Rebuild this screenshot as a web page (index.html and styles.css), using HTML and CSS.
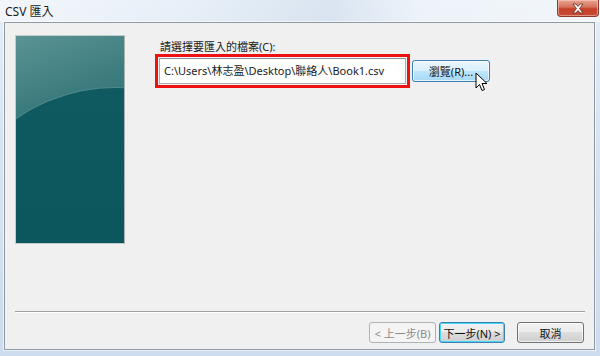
FILE: index.html
```html
<!DOCTYPE html>
<html lang="zh-Hant">
<head>
<meta charset="utf-8">
<title>CSV 匯入</title>
<link rel="stylesheet" href="styles.css">
</head>
<body>
<div class="window">
  <div class="titlebar">
    <span class="title">CSV 匯入</span>
    <div class="close">
      <svg width="16" height="11" viewBox="0 0 16 11">
        <path d="M3 1 L6 1 L8 3.5 L10 1 L13 1 L9.5 5.5 L13 10 L10 10 L8 7.5 L6 10 L3 10 L6.5 5.5 Z" fill="#fff" stroke="#5a2a20" stroke-width="0.8" stroke-linejoin="round"/>
      </svg>
    </div>
  </div>
  <div class="client">
    <div class="main">
      <div class="banner"></div>
      <div class="form">
        <div class="label">請選擇要匯入的檔案(C):</div>
        <div class="row">
          <div class="highlight">
            <div class="textbox">C:\Users\林志盈\Desktop\聯絡人\Book1.csv</div>
          </div>
          <div class="btn hover browse">瀏覽(R)...
            <svg class="cursor" width="14" height="21" viewBox="0 0 14 21">
              <path d="M1 1 L1 16 L4.5 12.5 L7 18.5 L9.5 17.5 L7 11.5 L12 11.5 Z" fill="#fff" stroke="#000" stroke-width="1" stroke-linejoin="miter"/>
            </svg>
          </div>
        </div>
      </div>
    </div>
    <div class="sep"></div>
    <div class="footer">
      <div class="btn disabled">&lt; 上一步(B)</div>
      <div class="btn default">下一步(N) &gt;</div>
      <div class="btn cancel">取消</div>
    </div>
  </div>
</div>
</body>
</html>
```
FILE: styles.css
```css
* { box-sizing: border-box; }
html, body { margin: 0; padding: 0; }
body {
  width: 600px;
  height: 356px;
  overflow: hidden;
  font-family: "Noto Sans", "Noto Sans CJK TC", sans-serif;
  font-size: 11px;
  color: #1a1a1a;
}
.window {
  width: 600px;
  height: 356px;
  display: flex;
  flex-direction: column;
  padding: 0 5px 6px 4px;
  background: linear-gradient(180deg, #e6eef7 0%, #d7e4f2 40%, #cddcee 100%);
}
.titlebar {
  height: 22px;
  display: flex;
  justify-content: space-between;
  align-items: flex-start;
  background: linear-gradient(90deg, rgba(255,255,255,0.5) 0%, rgba(255,255,255,0.1) 30%, rgba(200,215,232,0.4) 55%, rgba(255,255,255,0.3) 70%, rgba(255,255,255,0.5) 100%);
  margin: 0 -5px 0 -4px;
  padding: 0 5px 0 4px;
}
.title {
  font-size: 12px;
  line-height: 12px;
  margin-top: 6px;
  margin-left: 1px;
  color: #1b1b1b;
}
.close {
  width: 42px;
  height: 17px;
  margin-right: -4px;
  border: 1px solid #8a3a2c;
  border-top: none;
  border-radius: 0 0 4px 4px;
  background: linear-gradient(180deg, #e8a493 0%, #d5705a 45%, #c5412a 55%, #c64a33 100%);
  display: flex;
  align-items: center;
  justify-content: center;
  box-shadow: inset 0 0 0 1px rgba(255,220,210,0.5);
}
.client {
  flex: 1;
  display: flex;
  flex-direction: column;
  background: #f0f0f0;
  border: 1px solid #8f9aa5;
  box-shadow: 0 0 0 1px rgba(255,255,255,0.6);
}
.main {
  flex: 1;
  display: flex;
  padding: 12px 0 0 10px;
}
.banner {
  position: relative;
  overflow: hidden;
  width: 110px;
  height: 209px;
  border: 1px solid #c3cccc;
  border-right-color: #a9b0b0;
  background: linear-gradient(160deg, #5a9394 0%, #3d7c7e 30%, #2a6c70 60%, #1d6468 100%);
}
.banner::after {
  content: "";
  position: absolute;
  left: -75px;
  top: 52px;
  width: 350px;
  height: 350px;
  border-radius: 50%;
  background: linear-gradient(180deg, #0f5a60 0%, #0c565d 40%, #0f5c66 70%, #176474 100%);
  box-shadow: 0 -1px 0 rgba(120,170,170,0.35);
}
.form {
  margin-left: 30px;
  padding-top: 5px;
}
.label {
  line-height: 14px;
  margin-left: 5px;
  margin-bottom: 0px;
}
.row {
  display: flex;
  align-items: center;
  gap: 2px;
}
.highlight {
  width: 255px;
  height: 34px;
  border: 3px solid #ee1111;
  padding: 1px;
}
.textbox {
  height: 26px;
  background: #fff;
  border: 1px solid #abadb3;
  border-top-color: #8e9299;
  line-height: 24px;
  padding-left: 4px;
  font-size: 11px;
  white-space: nowrap;
}
.btn {
  height: 21px;
  border: 1px solid #707070;
  border-radius: 3px;
  display: flex;
  align-items: center;
  justify-content: center;
  background: linear-gradient(180deg, #f2f2f2 0%, #ebebeb 49%, #dddddd 50%, #cfcfcf 100%);
  box-shadow: inset 0 0 0 1px rgba(255,255,255,0.7);
  font-size: 11px;
  color: #111;
}
.browse {
  position: relative;
  width: 78px;
  height: 22px;
  margin-top: -1px;
}
.hover {
  border-color: #3c7fb1;
  background: linear-gradient(180deg, #eaf6fd 0%, #d9f0fc 49%, #bee6fd 50%, #a7d9f5 100%);
}
.cursor {
  position: absolute;
  left: 62px;
  top: 11px;
}
.sep {
  height: 2px;
  margin: 0 9px 0 10px;
  border-top: 1px solid #a0a0a0;
  border-bottom: 1px solid #ffffff;
}
.footer {
  display: flex;
  justify-content: flex-end;
  padding: 9px 10px 6px 0;
}
.footer .btn { width: 67px; }
.disabled {
  border-color: #adb2b5;
  background: #f4f4f4;
  color: #8a8a8a;
  box-shadow: none;
}
.default {
  margin-left: 3px;
  width: 66px !important;
  border-color: #3c7fb1;
  box-shadow: inset 0 0 0 1px #48d8fb;
}
.cancel { margin-left: 12px; }
```
